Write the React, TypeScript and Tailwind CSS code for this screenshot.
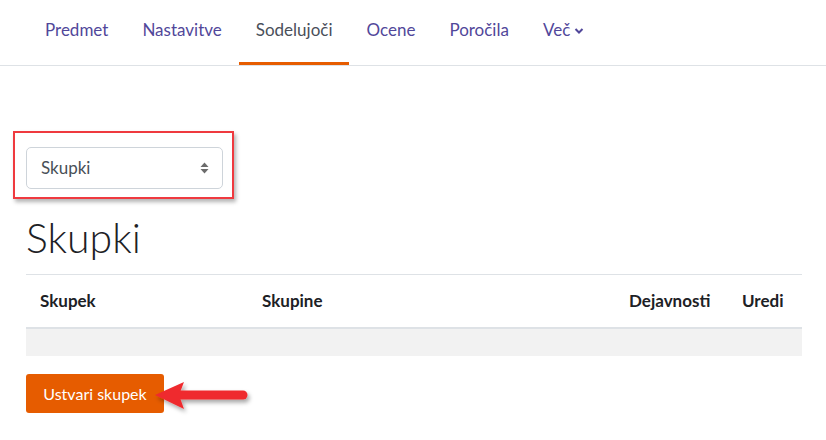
import React from "react";

const navItems = ["Predmet", "Nastavitve", "Sodelujoči", "Ocene", "Poročila"];

export default function App() {
  return (
    <div className="w-[826px] h-[440px] bg-white overflow-hidden" style={{ fontFamily: "Lato, 'Liberation Sans', sans-serif" }}>
      <nav className="h-[66px] border-b border-[#dee2e6] flex items-stretch pl-[28px]">
        {navItems.map((t) => {
          const active = t === "Sodelujoči";
          return (
            <div
              key={t}
              className={`px-[17px] flex items-center text-[17px] pb-[2px] border-b-[3px] ${active ? "border-[#e65c00] text-[#4a4f5a]" : "border-transparent text-[#51479a]"}`}
            >
              {t}
            </div>
          );
        })}
        <div className="px-[17px] flex items-center text-[17px] pb-[2px] border-b-[3px] border-transparent text-[#51479a] gap-[4px]">
          Več
          <svg width="10" height="8" viewBox="0 0 10 8" className="mt-[1px]">
            <path d="M1.5 2 L5 5.5 L8.5 2" fill="none" stroke="#51479a" strokeWidth="2" />
          </svg>
        </div>
      </nav>

      <div className="pl-[26px] pr-[24px]">
        <div className="relative mt-[81px] w-[197px] h-[42px]">
          <div className="absolute left-[-13px] top-[-16px] w-[221px] h-[68px] border-2 border-[#ef3a3f] shadow-[2px_3px_4px_rgba(0,0,0,0.3)] pointer-events-none" />
          <div className="w-full h-full border border-[#ced4da] rounded-[5px] flex items-center justify-between pl-[14px] pr-[13px] text-[#495057] text-[17px]">
            <span>Skupki</span>
            <svg width="9" height="12" viewBox="0 0 9 12">
              <path d="M4.5 0.5 L8.5 5 L0.5 5 Z" fill="#6c6c6c" />
              <path d="M0.5 7 L8.5 7 L4.5 11.5 Z" fill="#6c6c6c" />
            </svg>
          </div>
        </div>

        <h2 className="mt-[26px] text-[41px] font-light text-[#1d2125] leading-[46px]">Skupki</h2>

        <div className="mt-[13px] border-t border-[#dee2e6]">
          <div className="flex items-center h-[54px] border-b-2 border-[#dee2e6] font-bold text-[17px] text-[#1d2125]">
            <div className="pl-[14px] w-[236px]">Skupek</div>
            <div className="flex-1">Skupine</div>
            <div className="w-[113px] text-left">Dejavnosti</div>
            <div className="w-[60px] text-left">Uredi</div>
          </div>
          <div className="h-[27px] bg-[#f2f2f2]" />
        </div>

        <div className="relative mt-[18px] flex items-center">
          <button className="h-[39px] w-[138px] bg-[#e65c00] rounded-[3px] text-white text-[16px]">Ustvari skupek</button>
          <svg className="absolute left-[125px] top-0" width="110" height="46" viewBox="0 0 110 46">
            <defs>
              <filter id="sh" x="-20%" y="-30%" width="140%" height="170%">
                <feDropShadow dx="2" dy="3" stdDeviation="2" floodColor="#000" floodOpacity="0.35" />
              </filter>
            </defs>
            <g filter="url(#sh)">
              <path d="M4 21 L33 8 L28 21 L33 35 Z" fill="#ef2b2f" />
              <path d="M27 21 L92 21" stroke="#ef2b2f" strokeWidth="9" strokeLinecap="round" />
            </g>
          </svg>
        </div>
      </div>
    </div>
  );
}
